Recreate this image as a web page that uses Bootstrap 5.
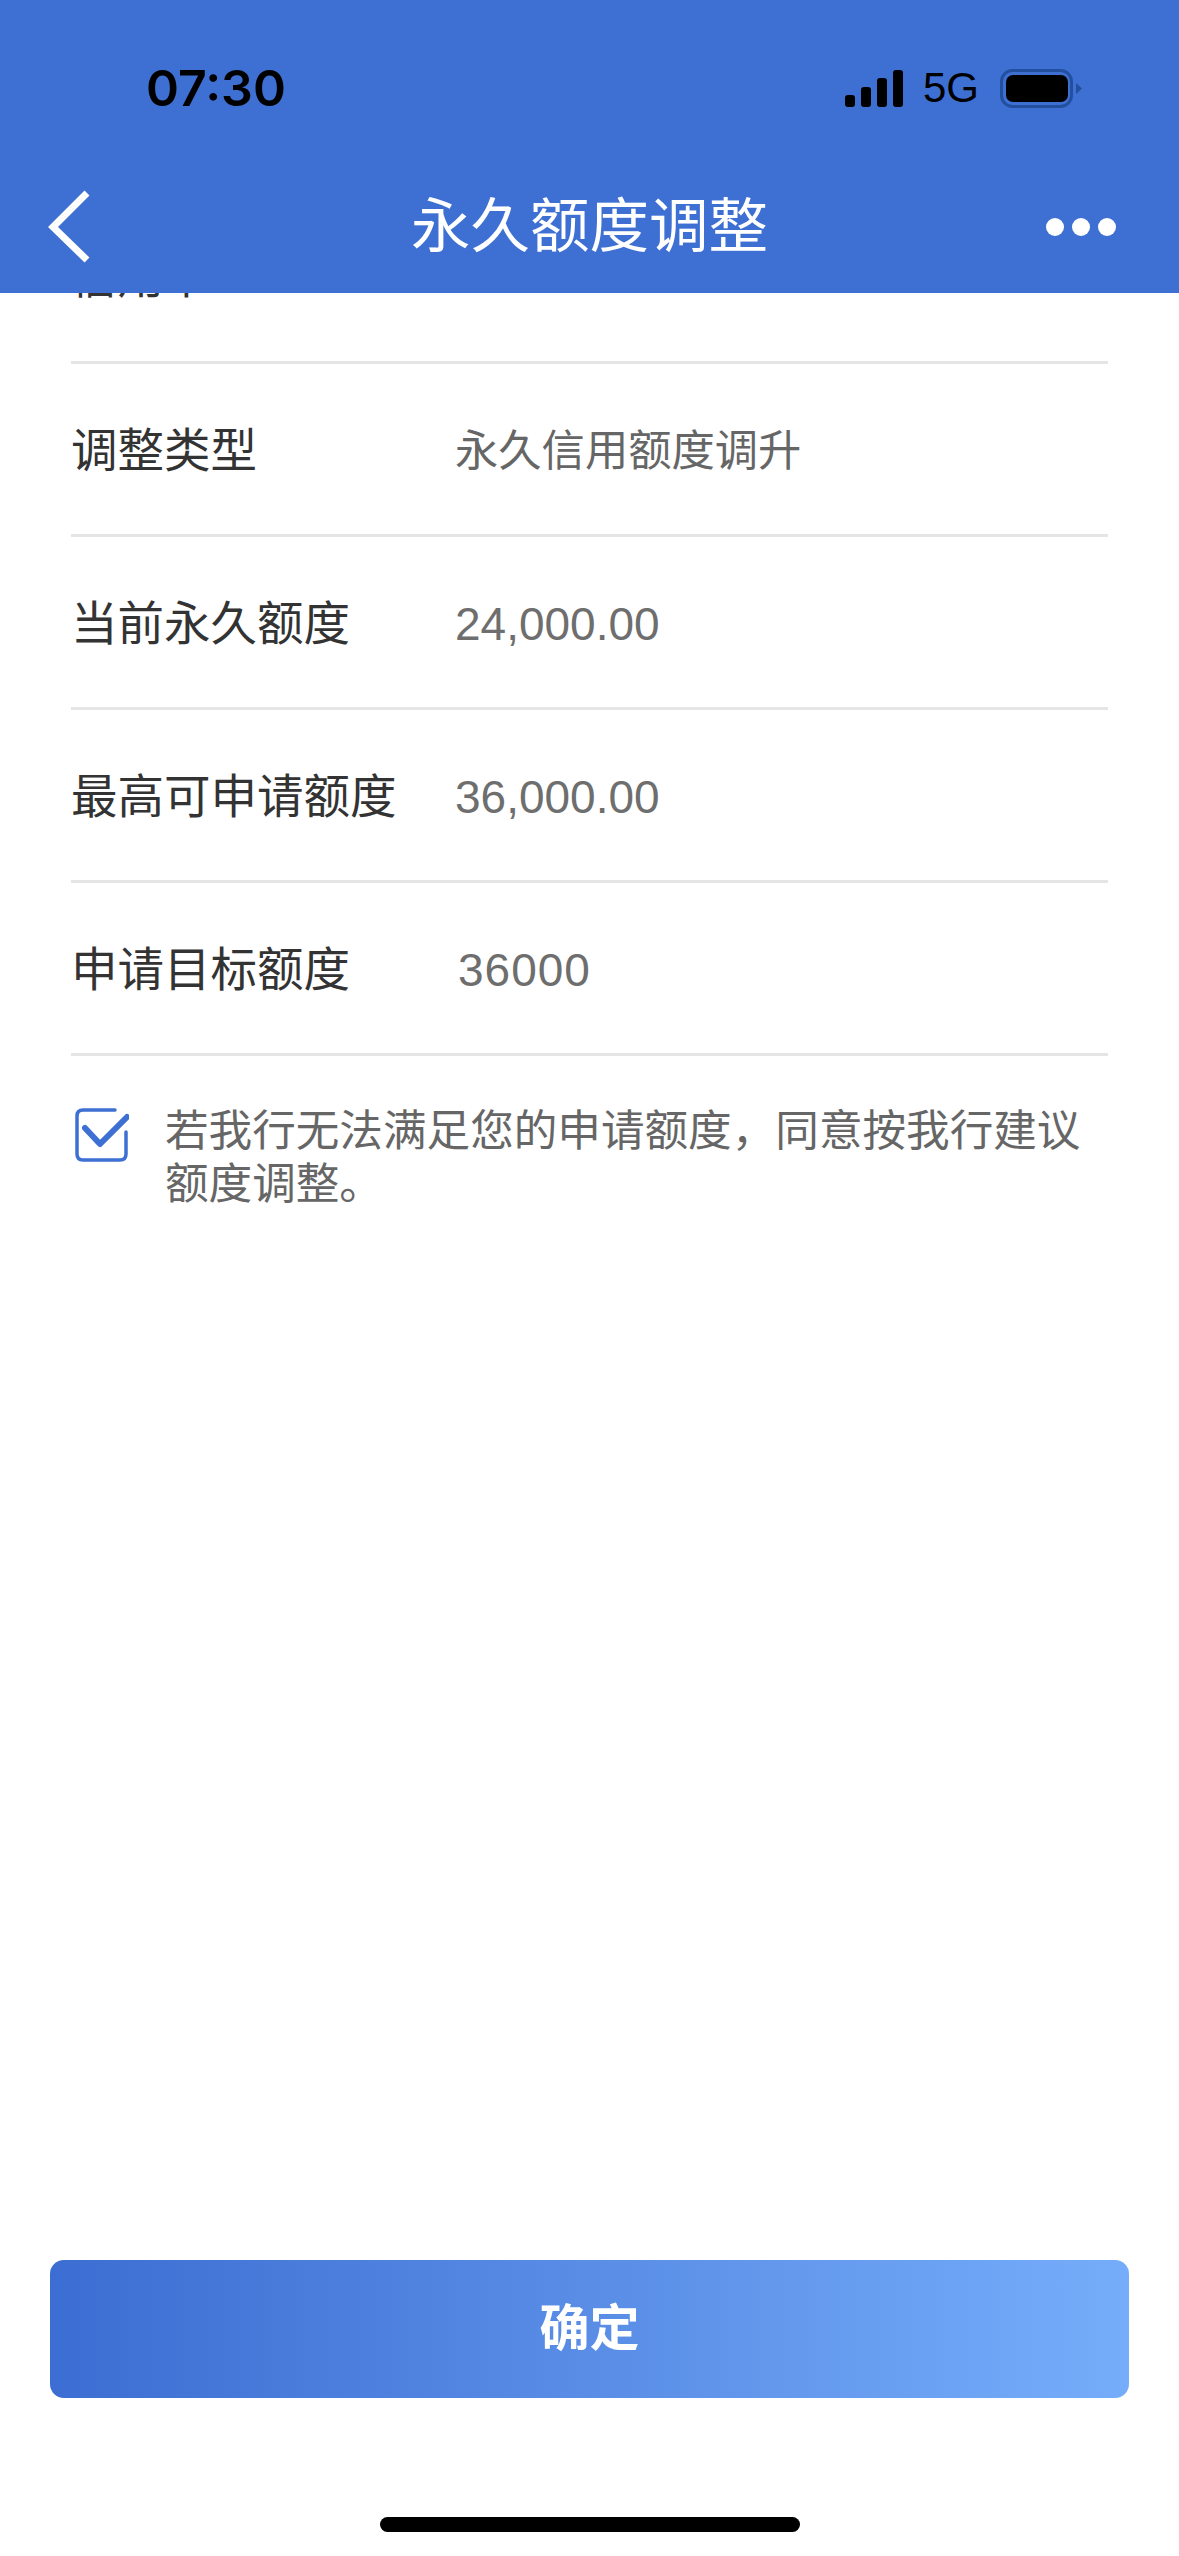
<!DOCTYPE html>
<html lang="zh-CN">
<head>
    <meta charset="UTF-8">
    <meta name="viewport" content="width=device-width, initial-scale=1.0">
    <title>永久额度调整</title>
    <link href="https://cdn.jsdelivr.net/npm/bootstrap@5.3.0/dist/css/bootstrap.min.css" rel="stylesheet">
    <style>
        html, body { height: 2556px; }
        body { background: #fff; font-family: "Liberation Sans", "Noto Sans CJK SC", sans-serif; overflow: hidden; }
        .phone-page { width: 1179px; height: 2556px; }
        .top-blue { height: 293px; background: #3e6fd3; flex-shrink: 0; }
        .status-row { height: 157px; padding: 60px 97px 0 146px; color: #000; }
        .clock-text { font-family: Inter, sans-serif; font-weight: 600; font-size: 50px; line-height: 56px; }
        .net-text { font-size: 42px; line-height: 56px; margin: 0 21px 0 20px; }
        .title-row { height: 136px; padding-top: 4px; }
        .title-text { font-size: 59.5px; line-height: 70px; color: #fff; }
        .back-icon { position: absolute; left: 46px; top: 31px; }
        .more-dots { position: absolute; right: 63px; top: 61px; }
        .more-dots span { width: 18px; height: 18px; border-radius: 50%; background: #fff; display: block; }
        .form-area { padding: 0 71px; flex-shrink: 0; }
        .info-row { height: 173px; padding-top: 3px; border-bottom: 3px solid #e5e5e5; }
        .info-row.cut-row { height: 71px; padding-top: 0; overflow: hidden; align-items: flex-start !important; }
        .cut-row .row-label, .cut-row .row-value { margin-top: -44px; }
        .row-label { width: 384px; font-size: 46.5px; line-height: 56px; color: #333; flex-shrink: 0; }
        .row-value { font-size: 43.3px; line-height: 56px; color: #666; }
        .row-value.num-text { font-size: 46px; color: #6e6e6e; }
        .row-value.input-text { padding-left: 3px; letter-spacing: 1px; }
        .agree-row { padding-top: 52px; padding-left: 4px; gap: 36px; }
        .agree-text { font-size: 43.6px; line-height: 53px; color: #666; margin-top: -3px; }
        .ok-btn { width: 1079px; height: 138px; margin: 0 auto; padding-top: 2px; border: 0; border-radius: 14px; color: #fff; font-size: 50px; font-weight: 600; background: linear-gradient(90deg, #3c6dd2, #76adfa); }
        .home-bar { width: 420px; height: 15px; border-radius: 8px; background: #000; margin: 119px auto 24px; }
    </style>
</head>
<body>
<div class="phone-page d-flex flex-column">
    <!-- Header -->
    <div class="top-blue">
        <div class="status-row d-flex justify-content-between align-items-start">
            <div class="clock-text">07:30</div>
            <div class="d-flex align-items-center">
                <svg width="58" height="37" viewBox="0 0 58 37">
                    <rect x="0" y="25" width="10" height="12" rx="3"/>
                    <rect x="16" y="17" width="10" height="20" rx="3"/>
                    <rect x="32" y="8" width="10" height="29" rx="3"/>
                    <rect x="48" y="0" width="10" height="37" rx="3"/>
                </svg>
                <span class="net-text">5G</span>
                <svg width="82" height="39" viewBox="0 0 82 39">
                    <rect x="1.5" y="1.5" width="70" height="36" rx="11" fill="none" stroke="#234f9f" stroke-width="3"/>
                    <rect x="6" y="6" width="62" height="27" rx="7" fill="#000"/>
                    <path d="M76 14 L82 19.5 L76 25 Z" fill="#234f9f"/>
                </svg>
            </div>
        </div>
        <div class="title-row position-relative d-flex justify-content-center align-items-center">
            <svg class="back-icon" width="48" height="76" viewBox="0 0 48 76" fill="none" stroke="#fff" stroke-width="7">
                <path d="M41 5 L7 39 L41 72"/>
            </svg>
            <div class="title-text">永久额度调整</div>
            <div class="more-dots d-flex gap-2"><span></span><span></span><span></span></div>
        </div>
    </div>

    <!-- Form rows -->
    <div class="form-area">
        <div class="info-row cut-row d-flex">
            <div class="row-label">信用卡</div>
            <div class="row-value num-text">6*********0000</div>
        </div>
        <div class="info-row d-flex align-items-center">
            <div class="row-label">调整类型</div>
            <div class="row-value">永久信用额度调升</div>
        </div>
        <div class="info-row d-flex align-items-center">
            <div class="row-label">当前永久额度</div>
            <div class="row-value num-text">24,000.00</div>
        </div>
        <div class="info-row d-flex align-items-center">
            <div class="row-label">最高可申请额度</div>
            <div class="row-value num-text">36,000.00</div>
        </div>
        <div class="info-row d-flex align-items-center">
            <div class="row-label">申请目标额度</div>
            <div class="row-value num-text input-text">36000</div>
        </div>
        <div class="agree-row d-flex align-items-start">
            <svg class="flex-shrink-0" width="54" height="54" viewBox="0 0 54 54" fill="none" stroke="#3e6fd3" stroke-linecap="round" stroke-linejoin="round">
                <path d="M40 2 H8 Q2 2 2 8 V46 Q2 52 8 52 H45 Q51 52 51 46 V24" stroke-width="3.5"/>
                <path d="M10 20 L25 36 L52 9" stroke-width="6"/>
            </svg>
            <div class="agree-text">若我行无法满足您的申请额度，同意按我行建议额度调整。</div>
        </div>
    </div>

    <!-- Footer -->
    <div class="mt-auto">
        <button type="button" class="ok-btn d-block">确定</button>
        <div class="home-bar"></div>
    </div>
</div>
<script src="https://cdn.jsdelivr.net/npm/bootstrap@5.3.0/dist/js/bootstrap.bundle.min.js"></script>
</body>
</html>
